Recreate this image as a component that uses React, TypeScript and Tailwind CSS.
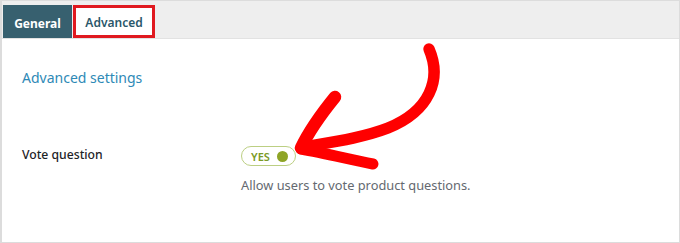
import React from "react";

export default function App() {
  return (
    <div
      className="relative w-[680px] h-[243px] bg-white border border-[#dcdcdc] border-l-2 overflow-hidden"
      style={{ fontFamily: '"Noto Sans", "Open Sans", sans-serif' }}
    >
      <div className="h-[38px] bg-[#eeeeee] border-b border-[#e2e2e2] flex items-end pl-[1px] gap-[1px]">
        <div className="h-[33px] w-[69px] bg-[#37606f] flex items-center justify-center pt-[5px] text-white text-[12px] font-bold">
          General
        </div>
        <div className="h-[33px] w-[82px] bg-white border-[3px] border-[#e0191f] flex items-center justify-center pt-[3px] text-[#29576a] text-[12px] font-semibold">
          Advanced
        </div>
      </div>
      <div className="pl-[20px] pt-[29px]">
        <div className="text-[14px] text-[#2e89b6] leading-[20px]">Advanced settings</div>
        <div className="flex mt-[58px]">
          <div className="w-[219px] text-[12.2px] font-medium text-[#1d2327] leading-[18px]">Vote question</div>
          <div className="flex flex-col">
            <div className="w-[55px] h-[20px] rounded-full border-[1.5px] border-[#bccf83] flex items-center pl-[9px] gap-[7px]">
              <span className="text-[11px] font-semibold text-[#7b9a26] leading-none">YES</span>
              <span className="w-[11px] h-[11px] rounded-full bg-[#8ea426]" />
            </div>
            <div className="mt-[10px] text-[12.8px] text-[#646970] leading-[18px]">
              Allow users to vote product questions.
            </div>
          </div>
        </div>
      </div>
      <svg className="absolute left-0 top-0 pointer-events-none" width="680" height="243" viewBox="0 0 680 243">
        <g fill="none" stroke="#ff0000" strokeLinecap="round" strokeLinejoin="round">
          <path d="M427 48 C 440 78, 428 110, 386 127 C 360 137, 330 141, 301 146" strokeWidth="11.5" />
          <path d="M333 96 C 320 112, 308 128, 299 147" strokeWidth="12.5" />
          <path d="M299 148 C 322 152, 346 158, 371 163" strokeWidth="11" />
        </g>
      </svg>
    </div>
  );
}
